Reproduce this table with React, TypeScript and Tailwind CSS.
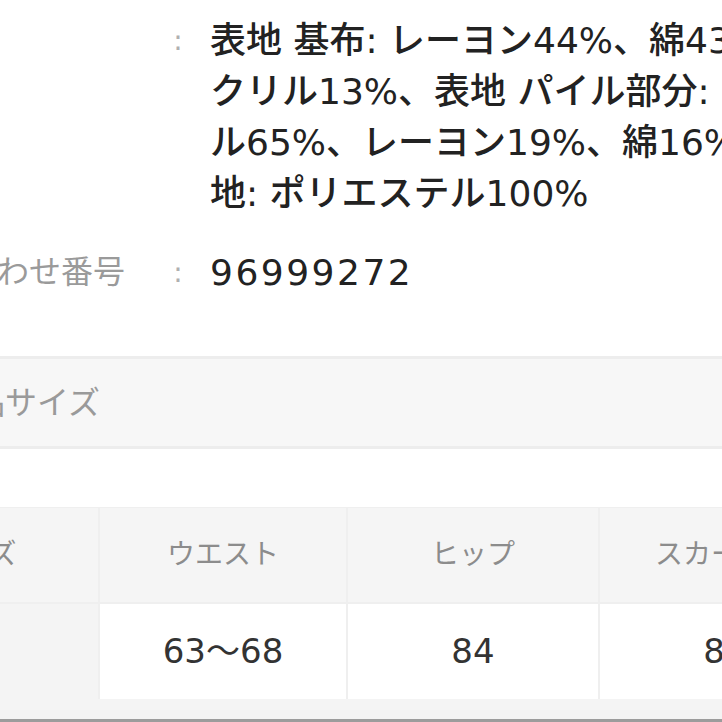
import React from "react";

const font = "font-['DejaVu_Sans','Noto_Sans_CJK_JP',sans-serif]";

const materialLines = [
  "表地 基布: レーヨン44%、綿43%、ア",
  "クリル13%、表地 パイル部分: ポリエステ",
  "ル65%、レーヨン19%、綿16%、裏",
  "地: ポリエステル100%",
];

const headers = ["サイズ", "ウエスト", "ヒップ", "スカート丈"];
const values = ["F", "63〜68", "84", "89"];

const InfoRow: React.FC<{ label: string; children: React.ReactNode; className?: string; valueClass?: string }> = ({
  label,
  children,
  className = "",
  valueClass = "",
}) => (
  <div className={`flex pl-[49px] ${className}`}>
    <div className="w-[261px] shrink-0 text-[32px] leading-[51px] text-[#9a9a9a] whitespace-nowrap">
      {label}
    </div>
    <div className="w-[32px] shrink-0 text-center text-[28px] leading-[51px] text-[#b0b0b0]">:</div>
    <div className={`ml-[16px] text-[36px] leading-[51px] font-medium text-[#222] whitespace-nowrap ${valueClass}`}>
      {children}
    </div>
  </div>
);

export default function App() {
  return (
    <div className={`w-[722px] h-[722px] overflow-hidden bg-white ${font}`}>
      <div className="ml-[-148px] w-[1200px] pt-[15px]">
        {/* Spec rows */}
        <InfoRow label="素材">
          {materialLines.map((line) => (
            <div key={line}>{line}</div>
          ))}
        </InfoRow>
        <InfoRow label="問い合わせ番号" className="mt-[28px]" valueClass="tracking-[2.5px]">
          96999272
        </InfoRow>

        {/* Section header */}
        <div className="mt-[58px] h-[93px] flex items-center border-y-[3px] border-[#ededed] bg-[#f7f7f7] pl-[89px]">
          <span className="text-[32px] text-[#9a9a9a]">商品サイズ</span>
        </div>

        {/* Size table */}
        <div className="mt-[58px]">
          <div className="grid grid-cols-[246px_246px_250px_250px] gap-[2px] bg-[#efefef] pt-[1px]">
            {headers.map((h) => (
              <div
                key={h}
                className="h-[94px] flex items-center justify-center bg-[#f5f5f5] text-[28px] text-[#8c8c8c] whitespace-nowrap"
              >
                {h}
              </div>
            ))}
            {values.map((v, i) => (
              <div
                key={i}
                className={`h-[95px] flex items-center justify-center text-[34px] text-[#333] ${
                  i === 0 ? "bg-[#f4f4f4]" : "bg-white"
                }`}
              >
                {v}
              </div>
            ))}
          </div>
          <div className="h-[20px] bg-[#f4f4f4]" />
          <div className="h-[4px] bg-[#9c9c9c]" />
        </div>
      </div>
    </div>
  );
}
